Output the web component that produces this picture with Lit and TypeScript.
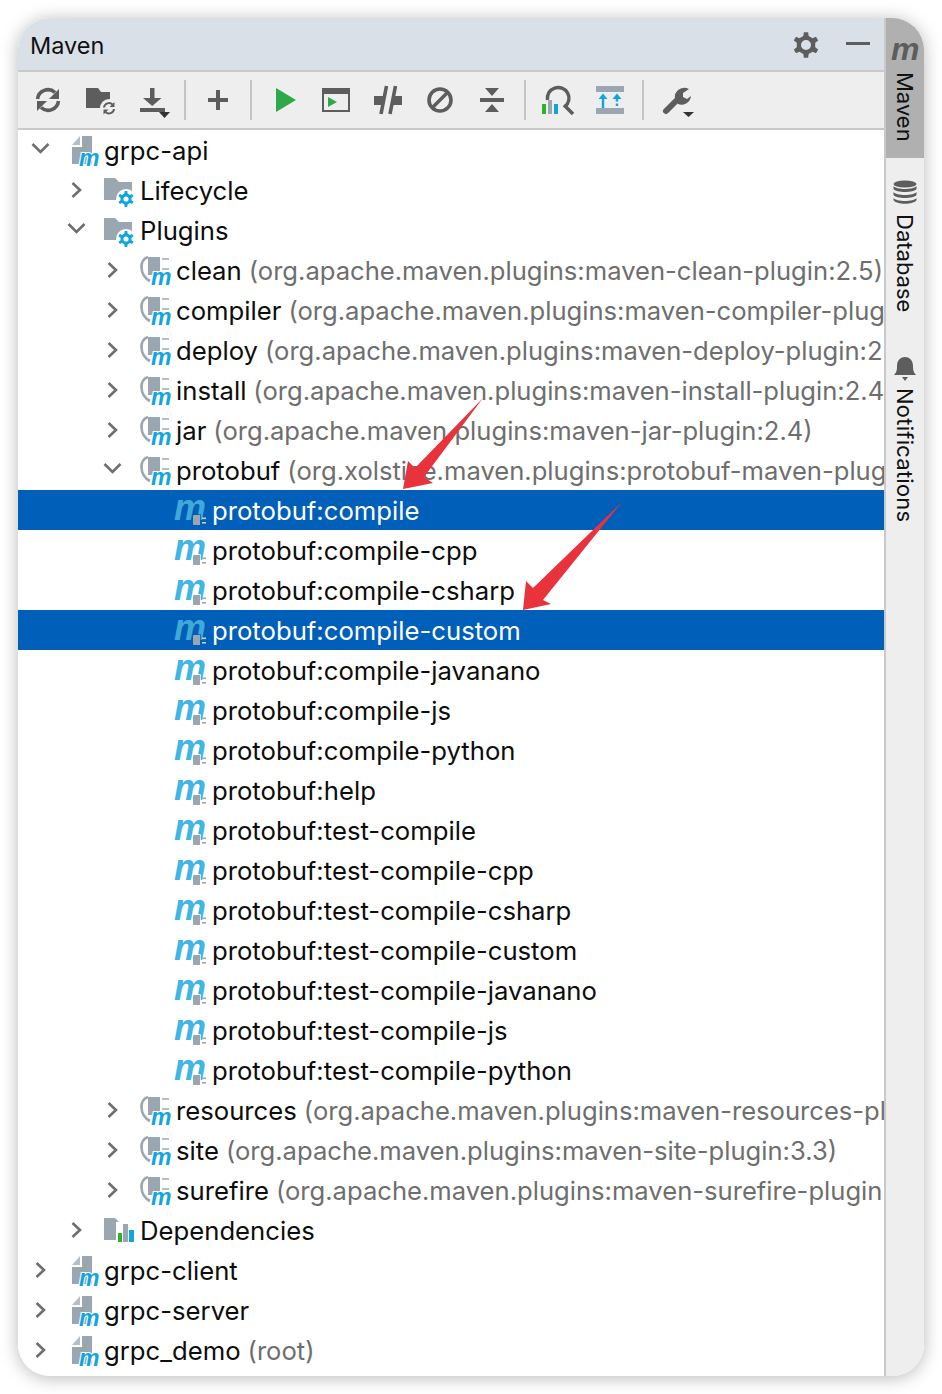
import { LitElement, css, html, svg } from "lit";
import { customElement } from "lit/decorators.js";

type Kind = "module" | "folder" | "deps" | "plugin" | "goal";

interface Row {
  depth: number;
  kind: Kind;
  name: string;
  hint?: string;
  open?: boolean;
  leaf?: boolean;
  selected?: boolean;
}

const PLUGIN_ORG = "org.apache.maven.plugins:maven-";

const goal = (name: string, selected = false): Row => ({
  depth: 3,
  kind: "goal",
  name: `protobuf:${name}`,
  leaf: true,
  selected,
});

// hints stop where the panel edge cuts them in the screenshot
const rows: Row[] = [
  { depth: 0, kind: "module", name: "grpc-api", open: true },
  { depth: 1, kind: "folder", name: "Lifecycle" },
  { depth: 1, kind: "folder", name: "Plugins", open: true },
  { depth: 2, kind: "plugin", name: "clean", hint: `(${PLUGIN_ORG}clean-plugin:2.5)` },
  { depth: 2, kind: "plugin", name: "compiler", hint: `(${PLUGIN_ORG}compiler-plug` },
  { depth: 2, kind: "plugin", name: "deploy", hint: `(${PLUGIN_ORG}deploy-plugin:2` },
  { depth: 2, kind: "plugin", name: "install", hint: `(${PLUGIN_ORG}install-plugin:2.4` },
  { depth: 2, kind: "plugin", name: "jar", hint: `(${PLUGIN_ORG}jar-plugin:2.4)` },
  { depth: 2, kind: "plugin", name: "protobuf", hint: "(org.xolstice.maven.plugins:protobuf-maven-plug", open: true },
  goal("compile", true),
  goal("compile-cpp"),
  goal("compile-csharp"),
  goal("compile-custom", true),
  goal("compile-javanano"),
  goal("compile-js"),
  goal("compile-python"),
  goal("help"),
  goal("test-compile"),
  goal("test-compile-cpp"),
  goal("test-compile-csharp"),
  goal("test-compile-custom"),
  goal("test-compile-javanano"),
  goal("test-compile-js"),
  goal("test-compile-python"),
  { depth: 2, kind: "plugin", name: "resources", hint: `(${PLUGIN_ORG}resources-pl` },
  { depth: 2, kind: "plugin", name: "site", hint: `(${PLUGIN_ORG}site-plugin:3.3)` },
  { depth: 2, kind: "plugin", name: "surefire", hint: `(${PLUGIN_ORG}surefire-plugin:` },
  { depth: 1, kind: "deps", name: "Dependencies" },
  { depth: 0, kind: "module", name: "grpc-client" },
  { depth: 0, kind: "module", name: "grpc-server" },
  { depth: 0, kind: "module", name: "grpc_demo", hint: "(root)" },
];

const DARK = "#5d5d5d";
const GREY = "#9aa7b0";
const BLUE = "#0fa5de";
const GREEN = "#2fa84a";

// gear outline with a round hole, teeth computed around the centre
function gearPath(cx: number, cy: number, outer: number, inner: number, hole: number, teeth = 6) {
  const pts: string[] = [];
  const step = (Math.PI * 2) / teeth;
  for (let i = 0; i < teeth; i++) {
    const a = i * step - Math.PI / 2;
    const w = step * 0.2;
    const corners: [number, number][] = [
      [a - w * 1.35, inner],
      [a - w * 0.8, outer],
      [a + w * 0.8, outer],
      [a + w * 1.35, inner],
    ];
    for (const [t, r] of corners) {
      pts.push(`${(cx + r * Math.cos(t)).toFixed(2)} ${(cy + r * Math.sin(t)).toFixed(2)}`);
    }
  }
  return `M${pts.join("L")}Z M${cx - hole} ${cy}a${hole} ${hole} 0 1 0 ${hole * 2} 0a${hole} ${hole} 0 1 0 ${-hole * 2} 0Z`;
}

const smallM = (x: number, y: number) => svg`
  <text x=${x} y=${y} class="m-small" fill=${BLUE} stroke="#fff" stroke-width="2" paint-order="stroke">m</text>`;

const moduleIcon = html`<svg class="icon" width="32" height="40" viewBox="0 0 32 40">
  <path d="M0 15 L8 6 V15Z" fill="#b4bfc7" />
  <path d="M10 6 H20 V34 H0 V17 H10Z" fill=${GREY} />
  ${smallM(7, 36)}
</svg>`;

const folderShape = svg`<path d="M0 8 H11 L15 12 H28 V30 H0Z" fill=${GREY} />`;

const folderIcon = html`<svg class="icon wide" width="36" height="40" viewBox="0 0 36 40">
  ${folderShape}
  <circle cx="22" cy="29" r="10" fill="#fff" />
  <path d=${gearPath(22, 29, 8, 5.6, 2.6)} fill=${BLUE} fill-rule="evenodd" />
</svg>`;

const depsIcon = html`<svg class="icon wide" width="36" height="40" viewBox="0 0 36 40">
  ${folderShape}
  <rect x="12" y="12" width="20" height="22" fill="#fff" />
  <rect x="14" y="23" width="4" height="9" fill="#2fb12a" />
  <rect x="19" y="14" width="5" height="18" fill=${GREY} />
  <rect x="25" y="20" width="5" height="12" fill=${BLUE} />
</svg>`;

const pluginIcon = html`<svg class="icon wide" width="36" height="40" viewBox="0 0 36 40">
  <path d="M8 7 C-1 10 -1 25 10 31" fill="none" stroke=${GREY} stroke-width="2.6" />
  <path d="M8 7 H20 V25 H8Z" fill=${GREY} />
  <rect x="22" y="8" width="7" height="2" fill="#b4bfc7" />
  <rect x="22" y="18" width="7" height="2" fill="#b4bfc7" />
  ${smallM(11, 35)}
</svg>`;

const goalIcon = (selected: boolean) => html`<svg class="icon wide" width="36" height="40" viewBox="0 0 36 40">
  <text x="-2" y="30" class="m-big" fill=${selected ? "#40a9d8" : "#40b6e4"}>m</text>
  <path d="M17 26 Q17 25 18 25 H24 V35 H18 Q17 35 17 34Z" fill=${GREY} stroke=${selected ? "#005fb8" : "#fff"} stroke-width="1.5" paint-order="stroke" />
  <rect x="26" y="27.5" width="4" height="1.6" fill=${selected ? "#c4d2dc" : GREY} />
  <rect x="26" y="32" width="4" height="1.6" fill=${selected ? "#c4d2dc" : GREY} />
</svg>`;

const chevronRight = html`<svg class="chev" width="24" height="40" viewBox="0 0 24 40">
  <path d="M8.500 13 L16 20 L8.500 27" fill="none" stroke="#6e6e6e" stroke-width="2.6" />
</svg>`;

const chevronDown = html`<svg class="chev" width="24" height="40" viewBox="0 0 24 40">
  <path d="M4.500 14 L12.500 22 L20.500 14" fill="none" stroke="#6e6e6e" stroke-width="2.6" />
</svg>`;

const iconFor = (row: Row) => {
  switch (row.kind) {
    case "module":
      return moduleIcon;
    case "folder":
      return folderIcon;
    case "deps":
      return depsIcon;
    case "plugin":
      return pluginIcon;
    default:
      return goalIcon(!!row.selected);
  }
};

const toolbarIcons = {
  refresh: svg`
    <path d="M5.5 15 A10.5 10.5 0 0 1 23 8.5" fill="none" stroke=${DARK} stroke-width="3.6" />
    <path d="M27 5 V15 H17Z" fill=${DARK} />
    <path d="M26.5 17 A10.5 10.5 0 0 1 9 23.5" fill="none" stroke=${DARK} stroke-width="3.6" />
    <path d="M5 27 V17 H15Z" fill=${DARK} />`,
  folderSync: svg`
    <path d="M2 4 H14 L17 8 H26 V24 H2Z" fill=${DARK} />
    <circle cx="25" cy="24" r="9" fill="#eee" />
    <path d="M20 23.5 A5 5 0 0 1 28.5 20.5 M30 25 A5 5 0 0 1 21.5 28" fill="none" stroke=${DARK} stroke-width="2" />
    <path d="M30.5 18 V23 H25.5Z M19.5 30.500 V25.500 H24.500Z" fill=${DARK} />`,
  download: svg`
    <rect x="14" y="4" width="4.500" height="10" fill=${DARK} />
    <path d="M7 14 H25.500 L16.200 22Z" fill=${DARK} />
    <rect x="4" y="24" width="25" height="4" fill=${DARK} />
    <path d="M23 28 H34 L28.500 34Z" fill="#333" />`,
  add: svg`<path d="M6 16 H26 M16 6 V26" stroke=${DARK} stroke-width="4" />`,
  play: svg`<path d="M8 4 L28 16 L8 28Z" fill=${GREEN} />`,
  runWindow: svg`
    <rect x="3" y="5" width="26" height="22" fill="none" stroke=${DARK} stroke-width="2" />
    <rect x="2" y="4" width="28" height="6" fill=${DARK} />
    <path d="M8 13 L17 18 L8 23Z" fill=${GREEN} />`,
  skip: svg`
    <path d="M2 12 H12 L10.500 21 H2Z M21 12 H30 V21 H19.500Z" fill=${DARK} />
    <path d="M14.500 2 L9 30 M23.500 2 L18 30" stroke=${DARK} stroke-width="3.600" />`,
  stop: svg`
    <circle cx="16" cy="16" r="11" fill="none" stroke=${DARK} stroke-width="3.600" />
    <path d="M8 24 L24 8" stroke=${DARK} stroke-width="3.600" />`,
  collapse: svg`
    <rect x="4" y="14" width="24" height="4" fill=${DARK} />
    <path d="M9 4 H23 L16 12Z M9 28 H23 L16 20Z" fill=${DARK} />`,
  analyze: svg`
    <path d="M5.500 16 A10.800 10.800 0 1 1 23 22.600" fill="none" stroke=${DARK} stroke-width="3.400" />
    <path d="M22 21 L31 30" stroke=${DARK} stroke-width="3.600" />
    <rect x="0" y="20" width="4" height="10" fill="#2fb12a" />
    <rect x="6" y="16" width="4" height="14" fill=${GREY} />
    <rect x="12" y="20" width="4" height="10" fill=${BLUE} />`,
  lifecycle: svg`
    <rect x="2" y="2" width="28" height="6" fill=${GREY} />
    <rect x="2" y="24" width="28" height="6" fill=${GREY} />
    <path d="M9 14 V24" stroke=${BLUE} stroke-width="2.400" />
    <path d="M4.500 15 L9 9.500 L13.500 15Z M18.500 15 L23 9.500 L27.500 15Z" fill=${BLUE} />
    <path d="M23 15 V24" stroke=${BLUE} stroke-width="2.400" stroke-dasharray="2.500 2" />`,
  wrench: svg`
    <path d="M6 27 L19 14" stroke=${DARK} stroke-width="6" stroke-linecap="round" />
    <path d="M15 15 A9.500 9.500 0 0 1 29 5 L23 9 V13 L27 15 L31 12 A9.500 9.500 0 0 1 18 20Z" fill=${DARK} />
    <path d="M23 28 H34 L28.500 33Z" fill="#333" />`,
};

const toolbarLayout: (keyof typeof toolbarIcons | "|")[] = [
  "refresh",
  "folderSync",
  "download",
  "|",
  "add",
  "|",
  "play",
  "runWindow",
  "skip",
  "stop",
  "collapse",
  "|",
  "analyze",
  "lifecycle",
  "|",
  "wrench",
];

@customElement("app-root")
export class AppRoot extends LitElement {
  static styles = css`
    :host {
      display: block;
      padding: 18px;
      background: #fff;
      font-family: Inter, "Liberation Sans", sans-serif;
    }

    .window {
      position: relative;
      display: flex;
      width: 906px;
      height: 1358px;
      border-radius: 32px;
      overflow: hidden;
      background: #fff;
    }

    .frame {
      position: absolute;
      top: 18px;
      left: 18px;
      width: 906px;
      height: 1358px;
      border-radius: 32px;
      box-shadow: 0 2px 18px rgba(0, 0, 0, 0.28);
    }

    .main {
      display: flex;
      flex-direction: column;
      width: 866px;
      min-width: 0;
    }

    .header {
      display: flex;
      align-items: center;
      height: 52px;
      padding: 2px 14px 0 12px;
      box-sizing: border-box;
      background: #dae0e8;
      font-size: 23.5px;
      color: #111;
    }

    .header-title {
      flex: 1;
    }

    .header-actions {
      display: flex;
      align-items: center;
      gap: 24px;
    }

    .toolbar {
      display: flex;
      align-items: center;
      height: 60px;
      box-sizing: border-box;
      padding-left: 4px;
      background: #eee;
      border-top: 2px solid #c9c9c9;
      border-bottom: 2px solid #c9c9c9;
    }

    .tool {
      display: flex;
      justify-content: center;
      width: 52px;
    }

    .tool svg {
      overflow: visible;
    }

    .sep {
      width: 2px;
      height: 40px;
      margin: 0 6px;
      background: #c4c4c4;
    }

    .tree {
      flex: 1;
      overflow: hidden;
    }

    .row {
      display: flex;
      align-items: center;
      height: 40px;
      padding-left: calc(10px + var(--depth) * 36px);
      white-space: nowrap;
      font-size: 25.7px;
      color: #0d0d0d;
    }

    .row.selected {
      background: #005fb8;
      color: #fff;
    }

    .chev {
      flex: none;
      margin-right: 20px;
    }

    .chev-gap {
      flex: none;
      width: 44px;
    }

    .icon {
      flex: none;
      overflow: visible;
    }

    .icon.wide {
      margin-left: -4px;
    }

    .name,
    .hint {
      padding-top: 1px;
    }

    .m-small {
      font: italic bold 23px "Liberation Sans", sans-serif;
    }

    .m-big {
      font: italic bold 36px "Liberation Sans", sans-serif;
    }

    .hint {
      margin-left: 7px;
      font-size: 25.6px;
      color: #6e6e6e;
    }

    .side {
      display: flex;
      flex-direction: column;
      align-items: center;
      width: 40px;
      box-sizing: border-box;
      background: #eee;
      border-left: 2px solid #c9c9c9;
    }

    .side-item {
      display: flex;
      flex-direction: column;
      align-items: center;
      width: 38px;
      color: #111;
      font-size: 22px;
    }

    .side-item.active {
      height: 140px;
      padding-top: 22px;
      box-sizing: border-box;
      background: #b0b0b0;
    }

    .side-item.db {
      padding-top: 22px;
    }

    .side-item.bell {
      padding-top: 45px;
    }

    .side-icon {
      overflow: visible;
    }

    .side-label {
      writing-mode: vertical-rl;
      line-height: 30px;
      margin-top: 7px;
    }

    .side-item.active .side-label {
      margin-top: 6px;
    }

    .side-item.db .side-label {
      margin-top: 10px;
    }

    .side-item.bell .side-label {
      letter-spacing: 0.25px;
    }

    .side-m {
      font: italic bold 32px "Liberation Sans", sans-serif;
    }

    .arrows {
      position: absolute;
      top: 0;
      left: 0;
      pointer-events: none;
    }
  `;

  private renderRow(row: Row) {
    return html`<div
      class="row ${row.selected ? "selected" : ""}"
      style="--depth:${row.depth}"
    >
      ${row.leaf
        ? html`<span class="chev-gap"></span>`
        : row.open
          ? chevronDown
          : chevronRight}
      ${iconFor(row)}
      <span class="name">${row.name}</span>
      ${row.hint ? html`<span class="hint">${row.hint}</span>` : ""}
    </div>`;
  }

  render() {
    return html`
      <div class="frame"></div>
      <div class="window">
        <div class="main">
          <div class="header">
            <span class="header-title">Maven</span>
            <div class="header-actions">
              <svg width="32" height="32" viewBox="0 0 32 32">
                <path d=${gearPath(16, 16, 13, 9.5, 5)} fill=${DARK} fill-rule="evenodd" />
              </svg>
              <svg width="24" height="32" viewBox="0 0 24 32">
                <rect x="0" y="13" width="24" height="3" fill=${DARK} />
              </svg>
            </div>
          </div>
          <div class="toolbar">
            ${toolbarLayout.map((name) =>
              name === "|"
                ? html`<div class="sep"></div>`
                : html`<div class="tool">
                    <svg width="32" height="32" viewBox="0 0 32 32">${toolbarIcons[name]}</svg>
                  </div>`
            )}
          </div>
          <div class="tree">${rows.map((row) => this.renderRow(row))}</div>
        </div>
        <div class="side">
          <div class="side-item active">
            <svg class="side-icon" width="26" height="26" viewBox="0 0 26 26">
              <text x="-1" y="20" class="side-m" fill=${DARK}>m</text>
            </svg>
            <span class="side-label">Maven</span>
          </div>
          <div class="side-item db">
            <svg width="24" height="24" viewBox="0 0 24 24">
              <ellipse cx="12" cy="4" rx="11.500" ry="3.600" fill=${DARK} />
              <path d="M0.500 6 V9 C3 13 21 13 23.500 9 V6 C21 10 3 10 0.500 6Z" fill=${DARK} />
              <path d="M0.500 12 V15 C3 19 21 19 23.500 15 V12 C21 16 3 16 0.500 12Z" fill=${DARK} />
              <path d="M0.500 18 V20 C3 25 21 25 23.500 20 V18 C21 22 3 22 0.500 18Z" fill=${DARK} />
            </svg>
            <span class="side-label">Database</span>
          </div>
          <div class="side-item bell">
            <svg width="24" height="24" viewBox="0 0 24 24">
              <path d="M1 18 C4 15 4 12 4 9 C4 3 8 0 12 0 C16 0 20 3 20 9 C20 12 20 15 23 18Z" fill=${DARK} />
              <path d="M9 20 H15 L12 24Z" fill=${DARK} />
            </svg>
            <span class="side-label">Notifications</span>
          </div>
        </div>
      </div>
      <svg class="arrows" width="942" height="1394" viewBox="0 0 942 1394">
        <path d="M483 398 L424 477 L433 483 L403 489 L408 461 L415 468Z" fill="#e8323c" />
        <path d="M622 502 L543 600 L551 604 L523 610 L526 581 L533 588Z" fill="#e8323c" />
      </svg>
    `;
  }
}
